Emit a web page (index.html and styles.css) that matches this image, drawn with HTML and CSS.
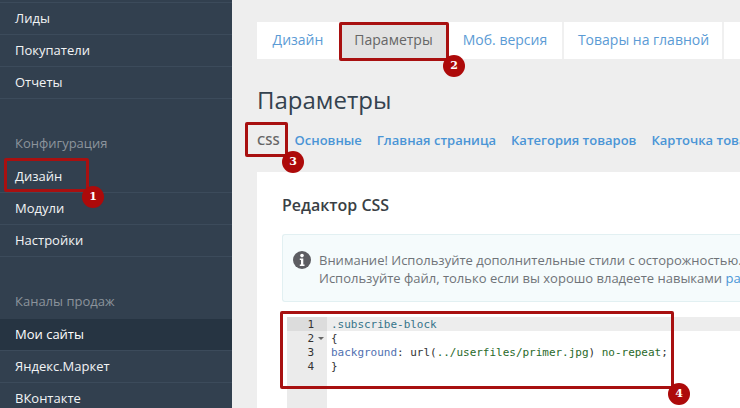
FILE: index.html
```html
<!DOCTYPE html>
<html lang="ru">
<head>
<meta charset="utf-8">
<title>Параметры</title>
<link rel="stylesheet" href="styles.css">
</head>
<body>
<div class="page">
  <nav class="sidebar">
    <ul class="menu menu-first">
      <li>Лиды</li>
      <li>Покупатели</li>
      <li>Отчеты</li>
    </ul>
    <div class="menu-label">Конфигурация</div>
    <ul class="menu">
      <li>Дизайн</li>
      <li>Модули</li>
      <li>Настройки</li>
    </ul>
    <div class="menu-label">Каналы продаж</div>
    <ul class="menu">
      <li class="active">Мои сайты</li>
      <li>Яндекс.Маркет</li>
      <li>ВКонтакте</li>
    </ul>
  </nav>
  <main class="content">
    <div class="tabs">
      <a class="tab tab-design">Дизайн</a>
      <a class="tab tab-active">Параметры</a>
      <a class="tab tab-mobile">Моб. версия</a>
      <a class="tab tab-goods">Товары на главной</a>
      <span class="tab-rest"></span>
    </div>
    <h1 class="title">Параметры</h1>
    <div class="subnav">
      <a class="sub sub-active">CSS</a>
      <a class="sub">Основные</a>
      <a class="sub">Главная страница</a>
      <a class="sub">Категория товаров</a>
      <a class="sub">Карточка товара</a>
    </div>
    <section class="card">
      <h2 class="card-title">Редактор CSS</h2>
      <div class="alert">
        <svg class="alert-icon" viewBox="0 0 18 18" width="18" height="18"><circle cx="9" cy="9" r="9" fill="#5d5d62"/><circle cx="9" cy="4.6" r="1.8" fill="#fff"/><path d="M6.8 7.4h3.5v6h1.2v1.5H6.8v-1.5H8V8.9H6.8z" fill="#fff"/></svg>
        <p class="alert-text">Внимание! Используйте дополнительные стили с осторожностью. Будьте внимательны<br>Используйте файл, только если вы хорошо владеете навыками <a class="alert-link">работы с CSS</a></p>
      </div>
      <div class="editor">
        <div class="gutter">
          <div class="gline gline-active">1</div>
          <div class="gline">2<span class="fold"></span></div>
          <div class="gline">3</div>
          <div class="gline">4</div>
        </div>
        <div class="code">
          <div class="cline cline-active"><span class="c-sel">.subscribe-block</span></div>
          <div class="cline">{</div>
          <div class="cline"><span class="c-prop">background</span>: url(<span class="c-url">../userfiles/primer.jpg</span>) <span class="c-url">no-repeat</span>;</div>
          <div class="cline">}</div>
        </div>
      </div>
    </section>
  </main>
</div>
<div class="mark mark-1"></div><div class="num num-1">1</div>
<div class="mark mark-2"></div><div class="num num-2">2</div>
<div class="mark mark-3"></div><div class="num num-3">3</div>
<div class="mark mark-4"></div><div class="num num-4">4</div>
</body>
</html>
```
FILE: styles.css
```css
html, body { margin: 0; padding: 0; width: 740px; height: 408px; overflow: hidden; }
body { position: relative; font-family: "Open Sans", sans-serif; background: #eeeeee; }
ul { list-style: none; margin: 0; padding: 0; }
.page { display: flex; width: 740px; height: 408px; overflow: hidden; }

.sidebar { flex: 0 0 232px; background: #32404f; padding-top: 2px; }
.menu li { height: 31px; line-height: 31px; padding-left: 15px; font-size: 13px; color: #f2f4f5; border-bottom: 1px solid #3c4b5b; }
.menu-first { border-top: 1px solid #3c4b5b; }
.menu li.active { background: #263442; color: #fff; }
.menu-label { height: 62px; box-sizing: border-box; padding: 35px 0 0 15px; font-size: 13px; line-height: 18px; color: #8c949c; }

.content { flex: 1; min-width: 0; padding: 22px 0 0 25px; }
.tabs { display: flex; height: 37px; background: #fff; }
.tab { display: block; line-height: 36px; font-size: 14px; color: #5b9bd5; text-align: center; box-sizing: border-box; }
.tab-design { width: 83px; padding-right: 1px; }
.tab-active { width: 107px; background: #e2e2e2; color: #666; }
.tab-mobile { width: 117px; padding-left: 1px; border-right: 2px solid #f0f0f0; }
.tab-goods { width: 160px; padding-left: 1px; border-right: 2px solid #f0f0f0; }
.tab-rest { flex: 1; }

.title { margin: 25px 0 0; font-size: 24px; font-weight: 400; line-height: 32px; color: #34424f; }
.subnav { display: flex; gap: 15px; margin-top: 12px; height: 24px; align-items: center; white-space: nowrap; }
.sub { font-size: 13px; font-weight: 600; color: #4a95d6; }
.sub-active { color: #666; }

.card { margin-top: 20px; height: 240px; background: #fff; padding: 22px 0 0 25px; }
.card-title { margin: 0; font-size: 16px; font-weight: 600; line-height: 22px; color: #3a3f45; }
.alert { display: flex; align-items: flex-start; box-sizing: border-box; width: 458px; height: 68px; margin-top: 18px; padding: 16px 0 0 10px; background: #f5fbfc; border: 1px solid #e2f0f2; border-right: 0; border-radius: 3px 0 0 3px; overflow: hidden; white-space: nowrap; }
.alert-icon { flex: none; margin-right: 8px; }
.alert-text { margin: 0; font-size: 13px; line-height: 18px; color: #6f7378; }
.alert-link { color: #4a95d6; }

.editor { display: flex; margin: 15px 0 0 5px; font-family: "DejaVu Sans Mono", monospace; font-size: 11px; line-height: 16px; letter-spacing: -0.02px; color: #333; }
.gutter { flex: 0 0 40px; height: 100px; background: #ebebeb; color: #333; }
.gline { position: relative; height: 14px; padding-right: 13px; text-align: right; }
.gline-active { background: #dcdcdc; }
.fold { position: absolute; right: 3px; top: 6px; width: 0; height: 0; border: 3px solid transparent; border-top: 3px solid #666; border-bottom: 0; }
.code { flex: 1; padding-left: 4px; white-space: nowrap; }
.cline { height: 14px; }
.cline-active { background: #ededed; margin-left: -4px; padding-left: 4px; }
.c-sel { color: #36748a; }
.c-prop { color: #4f6fb0; }
.c-url { color: #2a6a2a; }

.mark { position: absolute; box-sizing: border-box; border: 3px solid #a81010; border-radius: 2px; }
.mark-1 { left: 4px; top: 158px; width: 85px; height: 34px; }
.mark-2 { left: 339px; top: 22px; width: 110px; height: 39px; }
.mark-3 { left: 245px; top: 122px; width: 43px; height: 35px; }
.mark-4 { left: 280px; top: 311px; width: 394px; height: 78px; }
.num { position: absolute; width: 22px; height: 22px; border-radius: 50%; background: #ad0a0a; color: #fff; font-family: "DejaVu Serif", serif; font-size: 11px; font-weight: 700; line-height: 22px; text-align: center; }
.num-1 { left: 82px; top: 186px; }
.num-2 { left: 443px; top: 55px; }
.num-3 { left: 282px; top: 151px; }
.num-4 { left: 668px; top: 383px; }
```
